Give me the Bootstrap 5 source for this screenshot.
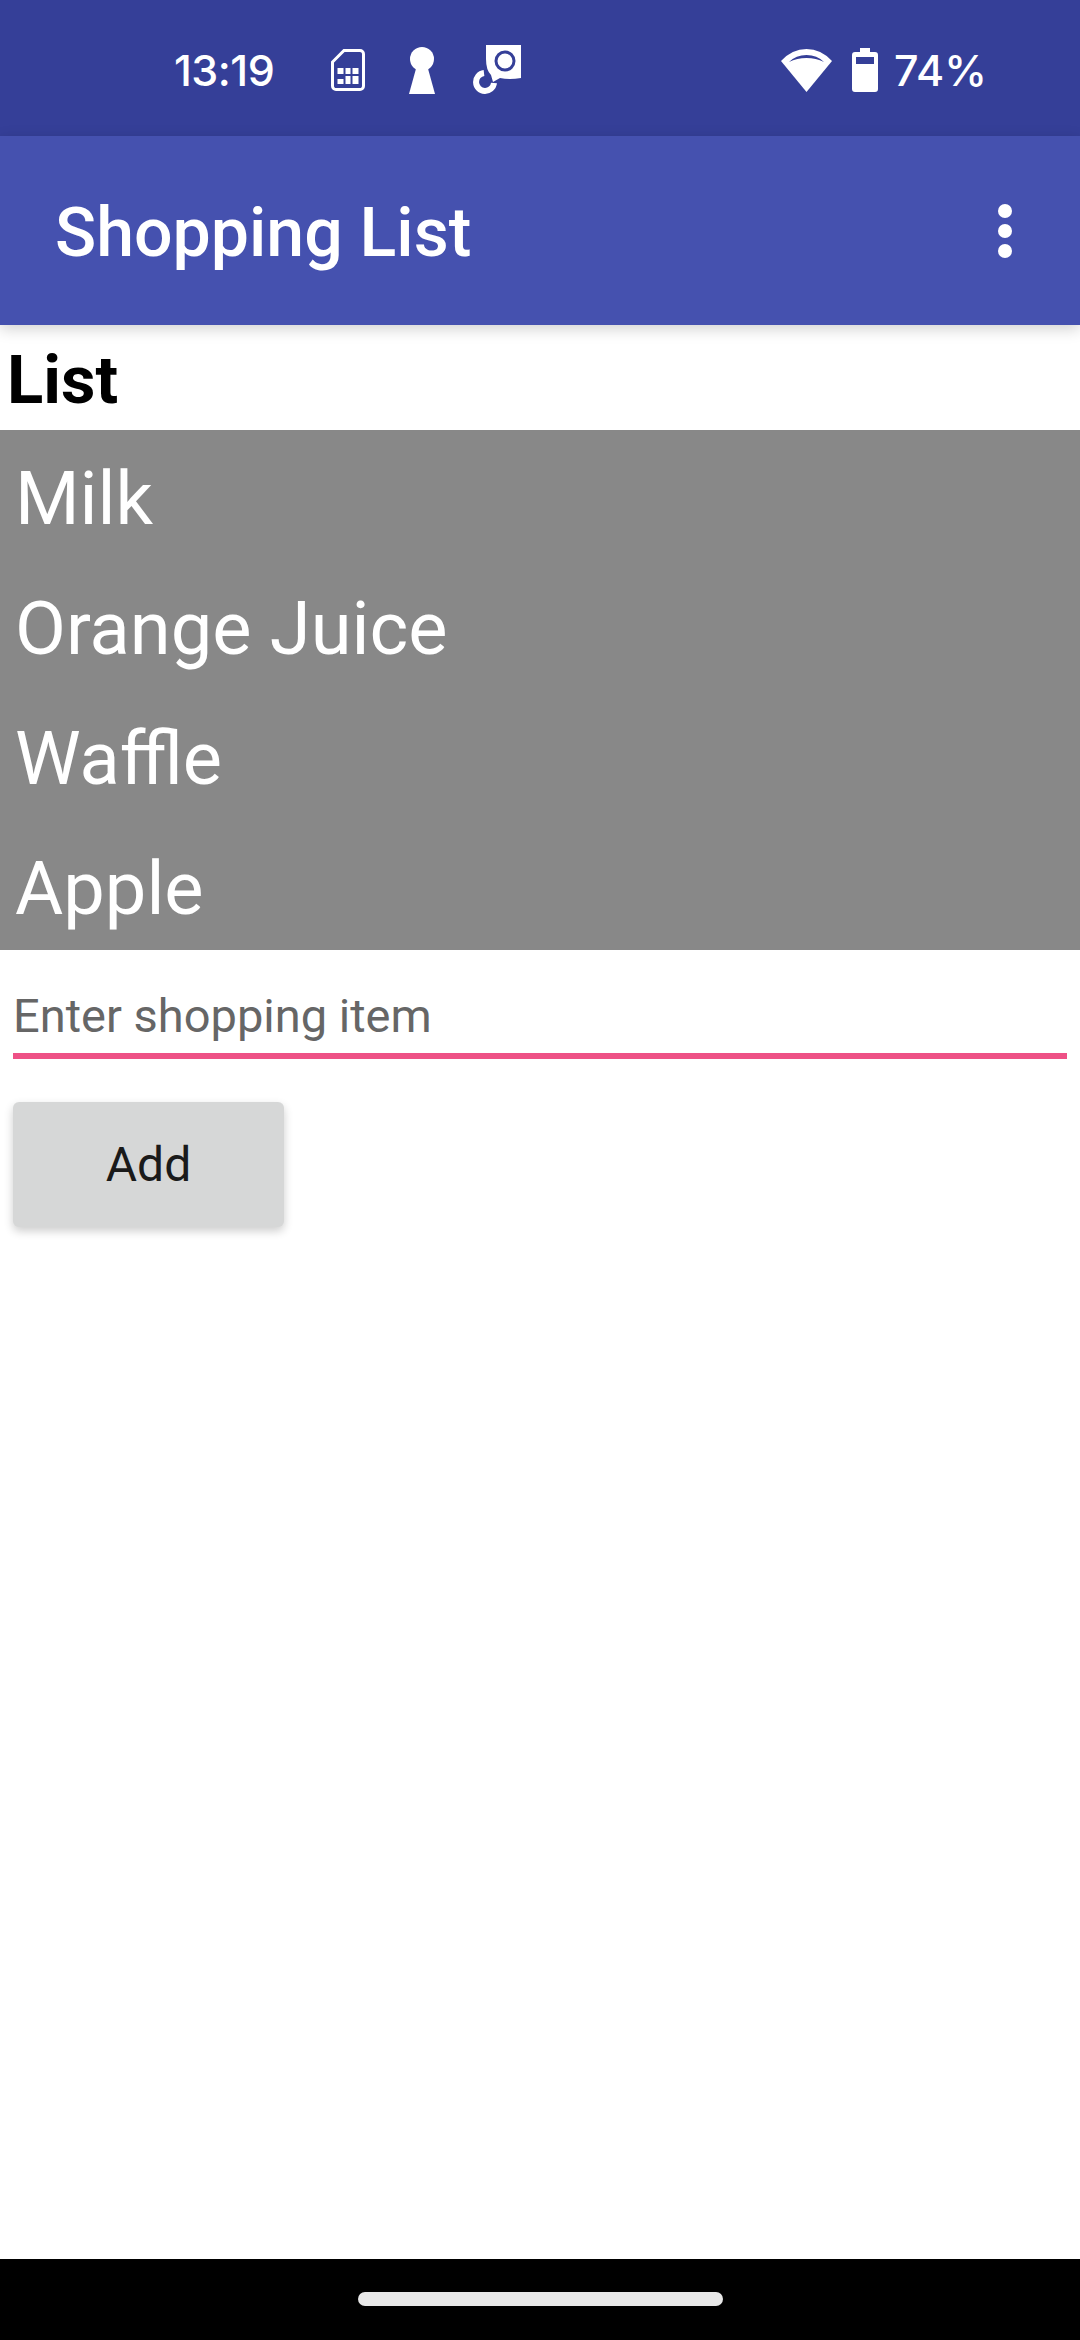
<!DOCTYPE html>
<html lang="en">
<head>
  <meta charset="UTF-8">
  <meta name="viewport" content="width=device-width, initial-scale=1.0">
  <title>Shopping List</title>
  <link href="https://cdn.jsdelivr.net/npm/bootstrap@5.3.3/dist/css/bootstrap.min.css" rel="stylesheet">
  <style>
    html, body { height: 100%; }
    body {
      width: 1080px;
      height: 2340px;
      overflow: hidden;
      font-family: Roboto, sans-serif;
      background: #fff;
    }

    .status-strip {
      height: 136px;
      background: #353f98;
      color: #fff;
      padding: 4px 93px 0 174px;
      font-family: Inter, Roboto, sans-serif;
      font-size: 43px;
      font-weight: 500;
    }
    .status-time { width: 113px; letter-spacing: -0.5px; }
    .status-left { gap: 44px; }
    .status-right { gap: 20px; }
    .status-strip svg { display: block; fill: #fff; }
    .status-strip .status-cast { margin-left: -6px; }
    .status-pct { margin-left: -4px; }

    .app-strip {
      height: 189px;
      background: #4551af;
      padding: 0 68px 0 55px;
      box-shadow: 0 4px 14px rgba(0, 0, 0, 0.18);
      position: relative;
    }
    .app-title { font-size: 68px; font-weight: 500; color: #fff; margin: 0; padding-top: 6px; }
    .app-dots { gap: 6px; }
    .app-dots span { width: 14px; height: 14px; border-radius: 50%; background: #fff; display: block; }

    .list-heading {
      height: 105px;
      margin: 0;
      padding-left: 7px;
      font-size: 67px;
      font-weight: 700;
      line-height: 110px;
      color: #000;
    }

    .item-list { background: #888888; border-radius: 0; }
    .item-list .list-group-item {
      height: 130px;
      padding: 0 15px;
      background: transparent;
      border: 0;
      color: #fff;
      font-size: 74px;
      line-height: 137px;
    }

    .entry-wrap { padding: 0 13px; }
    .entry-input {
      height: 109px;
      padding: 28px 0 0;
      border: 0;
      border-bottom: 6px solid #ee5186;
      border-radius: 0;
      font-size: 47px;
      color: #666;
      background: transparent;
    }
    .entry-input::placeholder { color: #666; opacity: 1; }

    .add-btn {
      width: 271px;
      height: 125px;
      margin-top: 43px;
      border: 0;
      border-radius: 6px;
      background: #d6d7d7;
      color: #1a1a1a;
      font-size: 48px;
      box-shadow: 0 4px 10px rgba(0, 0, 0, 0.2);
    }

    .nav-strip { height: 81px; background: #000; padding-top: 33px; }
    .nav-pill { width: 365px; height: 14px; border-radius: 7px; background: #e8e8e8; }
  </style>
</head>
<body class="d-flex flex-column">

  <div class="status-strip d-flex align-items-center justify-content-between">
    <div class="status-left d-flex align-items-center">
      <span class="status-time">13:19</span>
      <svg width="34" height="42" viewBox="0 0 34 42">
        <path d="M13 1.5H29a3.5 3.5 0 0 1 3.5 3.5V37a3.5 3.5 0 0 1-3.5 3.5H5A3.5 3.5 0 0 1 1.500 37V13Z" fill="none" stroke="#fff" stroke-width="3"/>
        <rect x="6.500" y="19" width="6" height="6"/><rect x="14.500" y="19" width="5" height="6"/><rect x="21.500" y="19" width="6" height="6"/>
        <rect x="6.500" y="30" width="6" height="5"/><rect x="14.500" y="27" width="5" height="8"/><rect x="21.500" y="27" width="6" height="8"/>
      </svg>
      <svg width="26" height="47" viewBox="0 0 26 47">
        <circle cx="13" cy="12" r="12"/>
        <path d="M8 18H18L26 47H0Z"/>
      </svg>
      <svg class="status-cast" width="49" height="50" viewBox="0 0 49 50">
        <path d="M13 0H48V33Q36 35 27 33L20 37 18 30Q13 25 13 14Z"/>
        <circle cx="32" cy="16" r="9" fill="none" stroke="#353f98" stroke-width="3"/>
        <path d="M11 28A9 9 0 1 0 21 38" fill="none" stroke="#fff" stroke-width="6"/>
      </svg>
    </div>
    <div class="status-right d-flex align-items-center">
      <svg width="51" height="43" viewBox="0 0 51 43">
        <path d="M25.500 43 0 12Q11 0 25.500 0T51 12Z"/>
        <path d="M8 13Q15 6 25.500 6T43 13Q35 9 25.500 9T8 13Z" fill="#353f98"/>
      </svg>
      <svg width="26" height="44" viewBox="0 0 26 44">
        <path d="M8 0H18V4H23a3 3 0 0 1 3 3V41a3 3 0 0 1-3 3H3a3 3 0 0 1-3-3V7a3 3 0 0 1 3-3H8Z"/>
        <rect x="4" y="9" width="18" height="7" fill="#353f98"/>
      </svg>
      <span class="status-pct">74%</span>
    </div>
  </div>

  <nav class="app-strip navbar d-flex align-items-center justify-content-between flex-nowrap">
    <h1 class="app-title">Shopping List</h1>
    <div class="app-dots d-flex flex-column"><span></span><span></span><span></span></div>
  </nav>

  <h2 class="list-heading">List</h2>

  <ul class="item-list list-group">
    <li class="list-group-item">Milk</li>
    <li class="list-group-item">Orange Juice</li>
    <li class="list-group-item">Waffle</li>
    <li class="list-group-item">Apple</li>
  </ul>

  <div class="entry-wrap flex-grow-1">
    <input class="entry-input form-control shadow-none" type="text" placeholder="Enter shopping item">
    <button class="add-btn btn d-block" type="button">Add</button>
  </div>

  <div class="nav-strip d-flex justify-content-center">
    <div class="nav-pill"></div>
  </div>

  <script src="https://cdn.jsdelivr.net/npm/bootstrap@5.3.3/dist/js/bootstrap.bundle.min.js"></script>
</body>
</html>
